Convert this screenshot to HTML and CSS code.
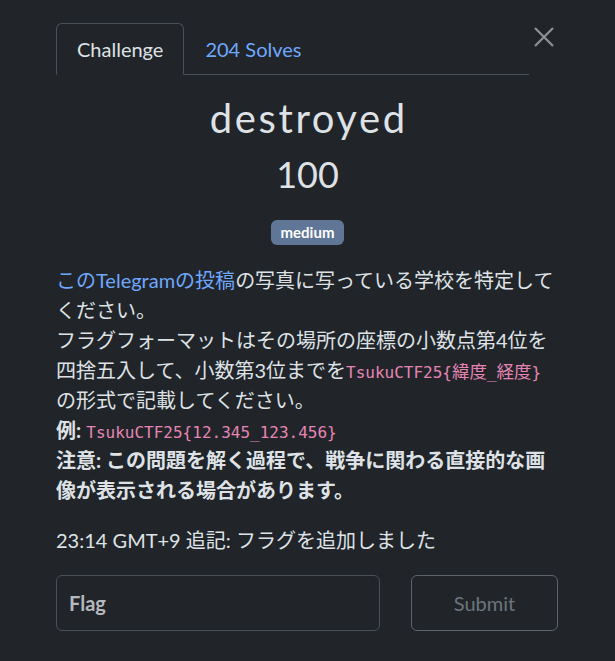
FILE: index.html
```html
<!DOCTYPE html>
<html lang="ja">
<head>
<meta charset="utf-8">
<title>destroyed</title>
<link rel="stylesheet" href="styles.css">
</head>
<body>
<div class="modal">
  <div class="header">
    <ul class="tabs">
      <li class="tab active">Challenge</li>
      <li class="tab link">204 Solves</li>
    </ul>
    <button class="close" aria-label="Close">
      <svg width="20" height="20" viewBox="0 0 20 20"><path d="M1 1L19 19M19 1L1 19" stroke="currentColor" stroke-width="2.2" fill="none"/></svg>
    </button>
  </div>
  <h1 class="title">destroyed</h1>
  <div class="value">100</div>
  <div class="badge-row"><span class="badge">medium</span></div>
  <div class="desc">
    <p><a class="lnk">このTelegramの投稿</a>の写真に写っている学校を特定してください。<br>
    フラグフォーマットはその場所の座標の小数点第4位を四捨五入して、小数第3位までを<code>TsukuCTF25{<span class="cjk">緯度</span>_<span class="cjk">経度</span>}</code>の形式で記載してください。<br>
    <strong>例:</strong> <code>TsukuCTF25{12.345_123.456}</code><br>
    <strong>注意: この問題を解く過程で、戦争に関わる直接的な画像が表示される場合があります。</strong></p>
    <p>23:14 GMT+9 追記: フラグを追加しました</p>
  </div>
  <form class="submit-row">
    <input class="flag" type="text" placeholder="Flag">
    <button type="button" class="submit">Submit</button>
  </form>
</div>
</body>
</html>
```
FILE: styles.css
```css
html, body {
  margin: 0;
  padding: 0;
  background: #212529;
}
body {
  font-family: Lato, "Noto Sans CJK JP", sans-serif;
  font-size: 20px;
  line-height: 1.5;
  color: #dee2e6;
}
.modal {
  padding: 23px 56px 0 56px;
}
.header {
  display: flex;
  align-items: flex-start;
}
.tabs {
  list-style: none;
  margin: 0;
  padding: 0;
  display: flex;
  flex: 1;
  border-bottom: 1px solid #495057;
}
.tab {
  padding: 10px 20px;
  border: 1px solid transparent;
  border-top-left-radius: 6px;
  border-top-right-radius: 6px;
  margin-bottom: -1px;
}
.tab.active {
  color: #dee2e6;
  background: #212529;
  border-color: #495057 #495057 #212529;
}
.tab.link {
  color: #6ea8fe;
}
.close {
  width: 30px;
  height: 34px;
  background: none;
  border: 0;
  padding: 4px 0 0 5px;
  color: #8f9193;
  display: flex;
  align-items: flex-start;
  cursor: pointer;
}
.title {
  margin: 19px 0 0;
  text-align: center;
  font-size: 40px;
  font-weight: 400;
  line-height: 1.2;
  letter-spacing: 2.6px;
  text-indent: 2.6px;
  color: #dee2e6;
}
.value {
  margin-top: 11px;
  text-align: center;
  font-size: 36px;
  line-height: 1.2;
}
.badge-row {
  text-align: center;
  margin-top: 24px;
  line-height: 1;
}
.badge {
  display: inline-block;
  background: #5f7696;
  color: #fff;
  font-weight: 700;
  font-size: 15px;
  line-height: 1;
  padding: 5px 10px 5px;
  border-radius: 6px;
}
.desc {
  margin-top: 20px;
}
.desc p {
  margin: 0 0 20px;
}
.lnk {
  color: #6ea8fe;
  text-decoration: none;
}
code {
  font-family: "DejaVu Sans Mono", "Noto Sans CJK JP", monospace;
  font-size: 16px;
  color: #e685b5;
}
.cjk {
  font-size: 17.5px;
}
strong {
  font-weight: 700;
}
.submit-row {
  display: flex;
  gap: 31px;
  margin: 0;
}
.flag {
  width: 324px;
  box-sizing: border-box;
  height: 56px;
  background: #212529;
  border: 1px solid #495057;
  border-radius: 6px;
  padding: 12px 12px;
  font-family: Lato, sans-serif;
  font-size: 20px;
  color: #dee2e6;
  outline: none;
}
.flag::placeholder {
  color: #b5b9bd;
  font-weight: 700;
}
.submit {
  width: 147px;
  height: 56px;
  background: transparent;
  border: 1px solid #5c636a;
  border-radius: 6px;
  color: #6c757d;
  font-family: Lato, sans-serif;
  font-size: 20px;
}
```
